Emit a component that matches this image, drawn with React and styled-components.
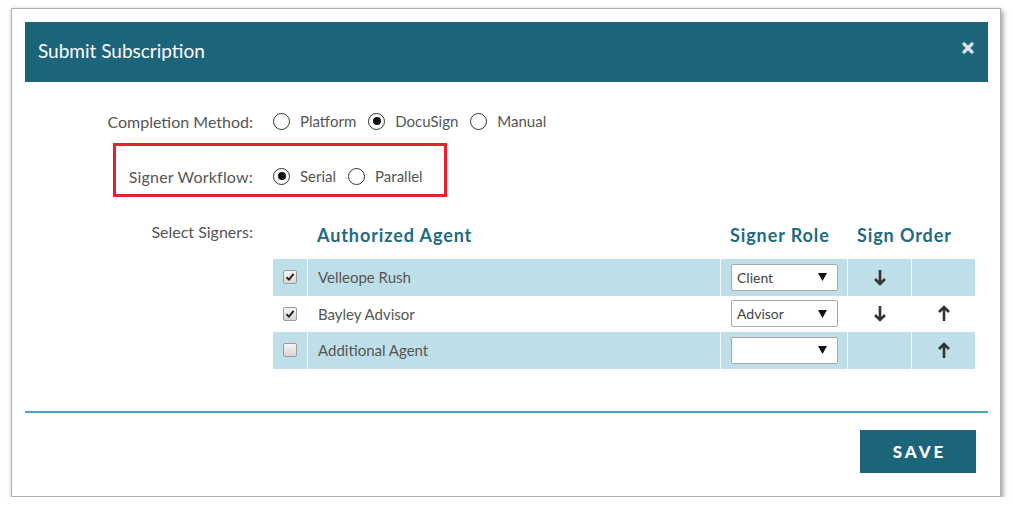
import React from "react"
import styled, { createGlobalStyle } from "styled-components"

const GlobalStyle = createGlobalStyle`
  body {
    margin: 0;
    background: #ffffff;
    font-family: "Lato", "Noto Sans", sans-serif;
  }
`

const signers = [
  { id: 1, name: "Velleope Rush", checked: true, role: "Client", down: true, up: false },
  { id: 2, name: "Bayley Advisor", checked: true, role: "Advisor", down: true, up: true },
  { id: 3, name: "Additional Agent", checked: false, role: "", down: false, up: true },
]

const CloseIcon = () => (
  <svg width="12" height="12" viewBox="0 0 12 12">
    <path d="M2 2 L10 10 M10 2 L2 10" stroke="#d9e4e8" strokeWidth="3.2" strokeLinecap="round" />
  </svg>
)

const CheckMark = () => (
  <svg width="10" height="10" viewBox="0 0 10 10">
    <path d="M1.5 5.2 L4 7.6 L8.6 1.8" stroke="#222" strokeWidth="1.9" fill="none" />
  </svg>
)

const Arrow = ({ dir }) => (
  <svg width="14" height="17" viewBox="0 0 14 17" style={{ transform: dir === "up" ? "rotate(180deg)" : "none" }}>
    <path d="M7 1 V15 M2 10 L7 15 L12 10" stroke="#333" strokeWidth="2.6" fill="none" strokeLinejoin="miter" />
  </svg>
)

const Caret = () => (
  <svg width="9" height="8" viewBox="0 0 9 8">
    <path d="M0 0 H9 L4.5 8 Z" fill="#111" />
  </svg>
)

const Radio = ({ checked, label }) => (
  <Option>
    <Circle>{checked && <Dot />}</Circle>
    {label}
  </Option>
)

const App = () => (
  <>
    <GlobalStyle />
    <Card>
      <Header>
        <Title>Submit Subscription</Title>
        <CloseButton><CloseIcon /></CloseButton>
      </Header>

      <Body>
        <FormRow $top={25}>
          <Label>Completion Method:</Label>
          <Options>
            <Radio label="Platform" />
            <Radio label="DocuSign" checked />
            <Radio label="Manual" />
          </Options>
        </FormRow>

        <FormRow $top={27} $highlight>
          <Label $spacing={0.2}>Signer Workflow:</Label>
          <Options>
            <Radio label="Serial" checked />
            <Radio label="Parallel" />
          </Options>
        </FormRow>

        <SignersRow>
          <SignersLabel>Select Signers:</SignersLabel>
          <Table>
            <HeadRow>
              <span />
              <HeadCell>Authorized Agent</HeadCell>
              <HeadCell>Signer Role</HeadCell>
              <HeadCell $span={2}>Sign Order</HeadCell>
            </HeadRow>
            {signers.map((s, i) => (
              <Row key={s.id} $shaded={i % 2 === 0}>
                <Cell $center>
                  <Checkbox>{s.checked && <CheckMark />}</Checkbox>
                </Cell>
                <Cell>{s.name}</Cell>
                <Cell>
                  <Select>
                    <span>{s.role}</span>
                    <Caret />
                  </Select>
                </Cell>
                <Cell $center>{s.down && <Arrow dir="down" />}</Cell>
                <Cell $center $last>{s.up && <Arrow dir="up" />}</Cell>
              </Row>
            ))}
          </Table>
        </SignersRow>

        <Divider />

        <Footer>
          <SaveButton>SAVE</SaveButton>
        </Footer>
      </Body>
    </Card>
  </>
)

export default App

const Card = styled.div`
  box-sizing: border-box;
  margin: 8px 0 0 11px;
  width: 990px;
  height: 489px;
  padding: 13px 12px 0 13px;
  background: #ffffff;
  border: 1px solid #b0b0b0;
  box-shadow: 2px 3px 5px rgba(0, 0, 0, 0.4), -1px -1px 4px rgba(0, 0, 0, 0.06);
`

const Header = styled.div`
  height: 60px;
  background: #1c6479;
  display: flex;
  align-items: center;
  justify-content: space-between;
  padding: 0 14px 0 13px;
`

const Title = styled.h1`
  margin: 0;
  font-size: 19px;
  font-weight: 400;
  color: #ffffff;
  margin-top: -4px;
`

const CloseButton = styled.span`
  display: flex;
  margin-top: -8px;
`

const Body = styled.div`
  display: flex;
  flex-direction: column;
`

const FormRow = styled.div`
  position: relative;
  display: flex;
  align-items: center;
  height: 28px;
  margin-top: ${({ $top }) => $top}px;

  ${({ $highlight }) =>
    $highlight &&
    `
    &::after {
      content: "";
      position: absolute;
      left: 88px;
      top: -19px;
      width: 328px;
      height: 48px;
      border: 3px solid #e8212b;
    }
  `}
`

const Label = styled.div`
  width: 228px;
  text-align: right;
  font-size: 16px;
  letter-spacing: ${({ $spacing }) => $spacing || 0}px;
  color: #555555;
  margin-right: 20px;
  flex-shrink: 0;
`

const Options = styled.div`
  display: flex;
  align-items: center;
  gap: 12px;
`

const Option = styled.label`
  display: flex;
  align-items: center;
  gap: 10px;
  font-size: 15px;
  color: #555555;
`

const Circle = styled.span`
  box-sizing: border-box;
  width: 17px;
  height: 17px;
  border: 1.5px solid #333333;
  border-radius: 50%;
  display: flex;
  align-items: center;
  justify-content: center;
`

const Dot = styled.span`
  width: 8px;
  height: 8px;
  border-radius: 50%;
  background: #111111;
`

const SignersRow = styled.div`
  display: flex;
  margin-top: 29px;
`

const SignersLabel = styled(Label)`
  padding-top: 3px;
  line-height: 20px;
`

const Table = styled.div`
  display: flex;
  flex-direction: column;
`

const columns = "35px 413px 127px 64px 63px"

const HeadRow = styled.div`
  display: grid;
  grid-template-columns: ${columns};
  height: 40px;
  align-items: center;
  padding-bottom: 8px;
  box-sizing: border-box;
`

const HeadCell = styled.div`
  grid-column: span ${({ $span }) => $span || 1};
  padding-left: 9px;
  font-size: 18px;
  font-weight: 700;
  letter-spacing: 0.9px;
  color: #1f6b7f;
  white-space: nowrap;
`

const Row = styled.div`
  display: grid;
  grid-template-columns: ${columns};
  height: 36.5px;
  background: ${({ $shaded }) => ($shaded ? "#bfdfe8" : "#ffffff")};
`

const Cell = styled.div`
  display: flex;
  align-items: center;
  justify-content: ${({ $center }) => ($center ? "center" : "flex-start")};
  padding-left: ${({ $center }) => ($center ? "0" : "10px")};
  border-right: ${({ $last }) => ($last ? "none" : "1px solid rgba(255, 255, 255, 0.85)")};
  font-size: 15px;
  color: #555555;
`

const Checkbox = styled.span`
  box-sizing: border-box;
  width: 14px;
  height: 14px;
  border: 1px solid #9a9a9a;
  border-radius: 2px;
  background: linear-gradient(#f6f6f6, #d6d6d6);
  display: flex;
  align-items: center;
  justify-content: center;
`

const Select = styled.div`
  box-sizing: border-box;
  width: 107px;
  height: 27px;
  background: #ffffff;
  border: 1px solid #a9a9a9;
  border-radius: 2px;
  display: flex;
  align-items: center;
  justify-content: space-between;
  padding: 0 10px 0 5px;
  font-size: 14px;
  color: #444444;
`

const Divider = styled.div`
  height: 2px;
  background: #4fa2ba;
  margin-top: 42px;
`

const Footer = styled.div`
  display: flex;
  justify-content: flex-end;
  padding-right: 12px;
  margin-top: 17px;
`

const SaveButton = styled.button`
  width: 116px;
  height: 43px;
  border: none;
  background: #1c6479;
  color: #ffffff;
  font-family: "Lato", sans-serif;
  font-size: 17px;
  font-weight: 900;
  letter-spacing: 3px;
  padding: 0 0 0 3px;
`
